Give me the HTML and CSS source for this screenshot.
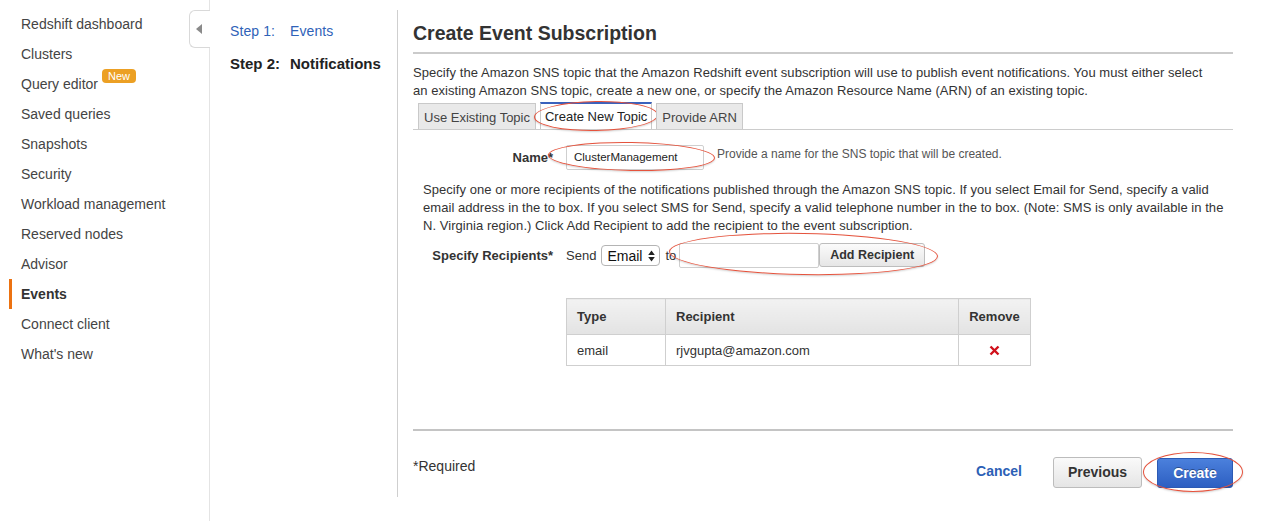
FILE: index.html
```html
<!DOCTYPE html>
<html>
<head>
<meta charset="utf-8">
<link rel="stylesheet" href="styles.css">
</head>
<body>
<div class="app">
  <nav class="sidebar">
    <div class="collapse"><span class="tri"></span></div>
    <ul class="nav">
      <li class="item">Redshift dashboard</li>
      <li class="item">Clusters</li>
      <li class="item">Query editor<span class="badge">New</span></li>
      <li class="item">Saved queries</li>
      <li class="item">Snapshots</li>
      <li class="item">Security</li>
      <li class="item">Workload management</li>
      <li class="item">Reserved nodes</li>
      <li class="item">Advisor</li>
      <li class="item active">Events</li>
      <li class="item">Connect client</li>
      <li class="item">What's new</li>
    </ul>
  </nav>
  <aside class="steps">
    <div class="step link"><span class="step-num">Step 1:</span><span>Events</span></div>
    <div class="step current"><span class="step-num">Step 2:</span><span>Notifications</span></div>
  </aside>
  <main class="main">
    <h1 class="title">Create Event Subscription</h1>
    <p class="desc">Specify the Amazon SNS topic that the Amazon Redshift event subscription will use to publish event notifications. You must either select an existing Amazon SNS topic, create a new one, or specify the Amazon Resource Name (ARN) of an existing topic.</p>
    <div class="tabs">
      <div class="tab">Use Existing Topic</div>
      <div class="tab tab-active">Create New Topic<span class="ring ring-tab"></span></div>
      <div class="tab">Provide ARN</div>
    </div>
    <div class="form-row name-row">
      <label class="label">Name*</label>
      <div class="input name-input">ClusterManagement<span class="ring ring-name"></span></div>
      <span class="hint">Provide a name for the SNS topic that will be created.</span>
    </div>
    <p class="desc2">Specify one or more recipients of the notifications published through the Amazon SNS topic. If you select Email for Send, specify a valid email address in the to box. If you select SMS for Send, specify a valid telephone number in the to box. (Note: SMS is only available in the N. Virginia region.) Click Add Recipient to add the recipient to the event subscription.</p>
    <div class="form-row rec-row">
      <label class="label">Specify Recipients*</label>
      <span class="plain">Send</span>
      <div class="select"><span>Email</span>
        <svg class="updown" width="7" height="12" viewBox="0 0 7 12"><path d="M3.5 0.5L6.8 5H0.2z M3.5 11.5L0.2 7H6.8z" fill="#222"/></svg>
      </div>
      <span class="plain to">to</span>
      <div class="addgroup">
        <div class="input to-input"></div>
        <div class="btn-add">Add Recipient</div>
        <span class="ring ring-add"></span>
      </div>
    </div>
    <table class="rtable">
      <thead>
        <tr><th class="c-type">Type</th><th class="c-rec">Recipient</th><th class="c-rem">Remove</th></tr>
      </thead>
      <tbody>
        <tr><td>email</td><td>rjvgupta@amazon.com</td><td class="c-rem">
          <svg width="11" height="11" viewBox="0 0 11 11"><path d="M1.5 1.5L9.5 9.5M9.5 1.5L1.5 9.5" stroke="#d0101b" stroke-width="2.4" stroke-linecap="butt"/></svg>
        </td></tr>
      </tbody>
    </table>
    <div class="footer">
      <span class="required">*Required</span>
      <div class="actions">
        <span class="cancel">Cancel</span>
        <span class="btn btn-prev">Previous</span>
        <span class="btn btn-create">Create<span class="ring ring-create"></span></span>
      </div>
    </div>
  </main>
</div>
</body>
</html>
```

FILE: styles.css
```css
* { box-sizing: border-box; }
html, body { margin: 0; padding: 0; background: #fff; }
body {
  font-family: "Liberation Sans", Arial, Helvetica, sans-serif;
  color: #333;
  width: 1273px;
  height: 521px;
  overflow: hidden;
}
.app { display: flex; height: 521px; }

/* sidebar */
.sidebar {
  width: 210px;
  flex: none;
  border-right: 1px solid #e4e4e4;
  position: relative;
  padding-top: 9px;
}
.collapse {
  position: absolute;
  top: 10px;
  right: -1px;
  width: 21px;
  height: 38px;
  background: #fff;
  border: 1px solid #d9d9d9;
  border-right: none;
  border-radius: 6px 0 0 6px;
  display: flex;
  align-items: center;
  justify-content: center;
}
.tri {
  width: 0; height: 0;
  border-top: 5px solid transparent;
  border-bottom: 5px solid transparent;
  border-right: 6px solid #8a8a8a;
  margin-left: -2px;
}
.nav { list-style: none; margin: 0; padding: 0 0 0 9px; }
.item {
  height: 30px;
  line-height: 30px;
  font-size: 14px;
  color: #444;
  padding-left: 9px;
  border-left: 3px solid transparent;
  white-space: nowrap;
}
.item.active { border-left-color: #ec7211; font-weight: bold; color: #333; }
.badge {
  display: inline-block;
  background: #eca024;
  color: #fff;
  font-size: 11px;
  line-height: 14px;
  padding: 0 6px;
  border-radius: 4px;
  margin-left: 4px;
  vertical-align: 9px;
}

/* steps */
.steps {
  width: 188px;
  flex: none;
  border-right: 1px solid #cfcfcf;
  margin-top: 10px;
  height: 487px;
  padding: 12px 0 0 20px;
}
.step { font-size: 14px; line-height: 18px; display: flex; white-space: nowrap; }
.step-num { width: 60px; }
.step.link { color: #2f62b8; letter-spacing: 0.1px; }
.step.current { font-weight: bold; color: #222; margin-top: 15px; font-size: 15px; }

/* main */
.main { flex: 1; padding: 0 40px 0 15px; min-width: 0; }
.title {
  margin: 21px 0 0;
  font-size: 19.5px;
  line-height: 24px;
  font-weight: bold;
  color: #333;
  padding-bottom: 7px;
  border-bottom: 2px solid #cbcbcb;
}
.desc {
  margin: 10px 0 0;
  font-size: 13px;
  line-height: 18px;
  color: #333;
  letter-spacing: 0.06px;
  max-width: 805px;
}
.tabs {
  margin-top: 3px;
  display: flex;
  gap: 4px;
  padding-left: 5px;
  border-bottom: 1px solid #cccccc;
  height: 27px;
}
.tab {
  position: relative;
  height: 26px;
  line-height: 27px;
  font-size: 13px;
  color: #444;
  background: #e9e9e9;
  border: 1px solid #c9c9c9;
  border-bottom: none;
  padding: 0 5px;
  white-space: nowrap;
}
.tab-active {
  background: #fff;
  color: #222;
  border-top: 2px solid #3a62bd;
  height: 27px;
  line-height: 25px;
  margin-top: -1px;
  padding: 0 4px;
}

.form-row { display: flex; align-items: center; }
.label {
  width: 153px;
  flex: none;
  text-align: right;
  padding-right: 13px;
  font-size: 13px;
  font-weight: bold;
  color: #333;
  white-space: nowrap;
}
.name-row { margin-top: 15px; }
.input {
  position: relative;
  height: 25px;
  border: 1px solid #cfcfcf;
  border-radius: 2px;
  background: #fff;
  font-size: 11.5px;
  line-height: 23px;
  padding-left: 7px;
  color: #222;
}
.name-input { width: 138px; }
.hint {
  align-self: flex-start;
  margin: 2px 0 0 13px;
  font-size: 12px;
  line-height: 15px;
  color: #555;
  white-space: nowrap;
}
.desc2 {
  margin: 11px 0 0;
  padding-left: 10px;
  font-size: 13px;
  line-height: 18px;
  color: #333;
  letter-spacing: 0.05px;
}
.rec-row { margin-top: 8px; height: 25px; }
.plain { font-size: 13px; color: #333; }
.select {
  margin-left: 5px;
  width: 59px;
  height: 21px;
  border: 1px solid #b4b4b4;
  border-radius: 4px;
  display: flex;
  align-items: center;
  justify-content: space-between;
  padding: 0 4px 0 5px;
  font-size: 14px;
  color: #111;
  background: #fff;
}
.to { margin-left: 5px; }
.addgroup { position: relative; display: flex; align-items: flex-start; margin-left: 3px; height: 25px; }
.to-input { width: 140px; }
.btn-add {
  width: 106px;
  height: 24px;
  border: 1px solid #bdbdbd;
  border-radius: 3px;
  background: linear-gradient(#fbfbfb, #e6e6e6);
  font-size: 12.5px;
  font-weight: bold;
  color: #333;
  text-align: center;
  line-height: 22px;
}

/* table */
.rtable {
  margin: 30px 0 0 153px;
  width: 465px;
  border-collapse: collapse;
  font-size: 13px;
  color: #333;
}
.rtable th, .rtable td { border: 1px solid #cfcfcf; text-align: left; padding: 0 10px; }
.rtable th {
  height: 36px;
  font-weight: bold;
  background: linear-gradient(#f2f2f2, #e3e3e3);
}
.rtable td { height: 31px; background: #fff; }
.c-type { width: 99px; }
.c-rem { width: 72px; text-align: center !important; }
.rtable td.c-rem svg { display: block; margin: 1px auto 0; }

/* footer */
.footer {
  margin-top: 63px;
  border-top: 2px solid #c4c4c4;
  display: flex;
  justify-content: space-between;
  align-items: flex-start;
  padding-top: 26px;
}
.required { font-size: 14px; line-height: 18px; color: #333; }
.actions { display: flex; align-items: center; }
.cancel { font-size: 14px; font-weight: bold; color: #2c5fb6; margin-right: 31px; line-height: 31px; margin-top: -3px; }
.btn {
  position: relative;
  height: 31px;
  line-height: 29px;
  font-size: 14px;
  font-weight: bold;
  text-align: center;
  border-radius: 3px;
}
.btn-prev {
  width: 89px;
  border: 1px solid #bcbcbc;
  background: linear-gradient(#fafafa, #e5e5e5);
  color: #333;
  margin-right: 15px;
}
.btn-create {
  width: 76px;
  height: 30px;
  margin-top: 1px;
  border: 1px solid #2c5ab4;
  background: linear-gradient(#4b80dc, #2d5fc2);
  color: #fff;
  text-shadow: 0 -1px 0 rgba(0,0,0,0.35);
}

/* annotation rings */
.ring {
  position: absolute;
  border: 1.5px solid #e5533d;
  border-radius: 50%;
  pointer-events: none;
  box-shadow: 0 1px 2px rgba(0,0,0,0.18);
}
.ring-tab { left: -7px; right: -7px; top: -3px; bottom: -2px; transform: rotate(-1deg); }
.ring-name { left: -19px; right: -12px; top: -4px; bottom: -2px; transform: rotate(1deg); }
.ring-add { left: -10px; right: -13px; top: -10px; bottom: -7px; transform: rotate(1deg); }
.ring-create { left: -15px; right: -11px; top: -7px; bottom: -5px; }
```
